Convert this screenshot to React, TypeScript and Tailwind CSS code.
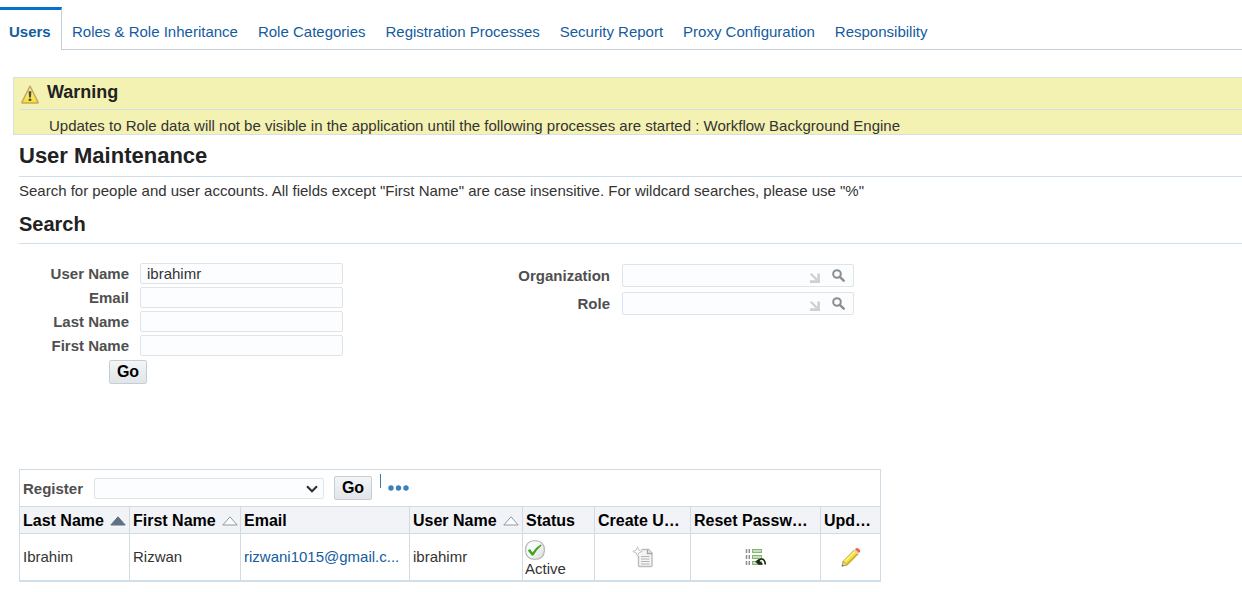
import React from 'react';

const tabs = [
  'Roles & Role Inheritance',
  'Role Categories',
  'Registration Processes',
  'Security Report',
  'Proxy Configuration',
  'Responsibility',
];

function WarningIcon() {
  return (
    <svg className="h-[19px] w-[18px] shrink-0" viewBox="0 0 18 19" aria-hidden="true">
      <defs>
        <linearGradient id="warn" x1="0" y1="0" x2="0" y2="1">
          <stop offset="0" stopColor="#f8f3a8" />
          <stop offset="1" stopColor="#f3e22c" />
        </linearGradient>
      </defs>
      <path d="M9 1.2 17 17.2Q17.3 18 16.4 18H1.6Q.7 18 1 17.2Z" fill="url(#warn)" stroke="#c5a868" strokeWidth="1.5" strokeLinejoin="round" />
      <path d="M7.6 6.2h2.8l-.5 6.3H8.100Z" fill="#4b4a3c" />
      <rect x="7.7" y="13.7" width="2.6" height="2.2" fill="#4b4a3c" />
    </svg>
  );
}

function LovIcons() {
  return (
    <>
      <svg className="mt-1 h-[10px] w-[10px]" viewBox="0 0 10 10" aria-hidden="true">
        <path d="M.8.8 7 7" stroke="#cfcfcf" strokeWidth="2.2" fill="none" />
        <path d="M8.6.5v8.100H0" stroke="#cfcfcf" strokeWidth="2.600" fill="none" />
      </svg>
      <button type="button" aria-label="Search for value" className="flex">
        <svg className="h-[13px] w-[13px]" viewBox="0 0 13 13" aria-hidden="true">
          <circle cx="5" cy="5" r="3.800" fill="none" stroke="#8b8e91" strokeWidth="2" />
          <path d="m7.8 7.8 3.900 3.900" stroke="#8b8e91" strokeWidth="2.400" strokeLinecap="round" />
        </svg>
      </button>
    </>
  );
}

function TextField({ id, label, value = '' }: { id: string; label: string; value?: string }) {
  return (
    <>
      <label htmlFor={id} className="text-right font-bold text-[#4f4f4f]">{label}</label>
      <input id={id} defaultValue={value} className="h-[21px] w-[203px] rounded-xs border border-[#dfe4e7] bg-[#fcfdfe] px-1.5 text-[#333333] outline-none" />
    </>
  );
}

function LovField({ id, label }: { id: string; label: string }) {
  return (
    <>
      <label htmlFor={id} className="text-right font-bold text-[#4f4f4f]">{label}</label>
      <div className="flex h-[23px] w-[232px] items-center gap-3 rounded-xs border border-[#dfe4e7] bg-[#fcfdfe] pr-2">
        <input id={id} className="min-w-0 flex-1 bg-transparent px-1.5 text-[#333333] outline-none" />
        <LovIcons />
      </div>
    </>
  );
}

function GoButton() {
  return (
    <button type="button" className="h-6 w-[38px] rounded-xs border border-[#c4ced7] bg-linear-to-b from-[#f3f5f6] to-[#e1e5e8] text-base leading-5 font-bold text-black">
      Go
    </button>
  );
}

function SortIcon({ active = false }: { active?: boolean }) {
  return (
    <svg className="h-[10px] w-4 shrink-0" viewBox="0 0 16 10" aria-hidden="true">
      <path d="M8 .8 15.2 9H.8Z" fill={active ? '#5f7284' : '#fafbfc'} stroke={active ? '#5f7284' : '#8d9aa5'} />
    </svg>
  );
}

function SortHeader({ children, active }: { children: string; active?: boolean }) {
  return (
    <button type="button" className="flex items-center gap-[6px] pb-px font-bold whitespace-nowrap">
      {children}
      <SortIcon active={active} />
    </button>
  );
}

function CheckIcon() {
  return (
    <svg className="h-5 w-5" viewBox="0 0 20 20" aria-hidden="true">
      <defs>
        <linearGradient id="disc" x1="0" y1="0" x2="1" y2="1">
          <stop offset="0" stopColor="#ffffff" />
          <stop offset=".5" stopColor="#f6f6f6" />
          <stop offset="1" stopColor="#d8d8d8" />
        </linearGradient>
      </defs>
      <rect x=".7" y=".7" width="18.600" height="18.600" rx="8" fill="url(#disc)" stroke="#b0b0b0" strokeWidth="1.100" />
      <path d="m2.800 10.400 2.300-1.500 2.400 3.500Q10.500 7.400 15.700 4.400l1.100.9Q11.700 9.700 8.400 15.400H6.800Z" fill="#3da51d" />
    </svg>
  );
}

function CreateIcon() {
  return (
    <svg className="h-[22px] w-[21px]" viewBox="0 0 21 22" aria-hidden="true">
      <path d="M9.500 3.500h7l3.500 3.500v12.500q0 1-1 1H7.500q-1 0-1-1V10" fill="#f4f4f4" stroke="#bcbcbc" strokeWidth="1.400" />
      <path d="M15.500 3.500v4h4.500" fill="#eeeeee" stroke="#a4a4a4" strokeWidth="1.300" />
      <path d="M9 10.500h8.500M9 13h8.500M9 15.500h8.500M9 18h8.500" stroke="#b3b3b3" strokeWidth="1.200" />
      <path d="m5.500.8 1.300 3.400L10.200 5.500 6.800 6.800 5.500 10.200 4.200 6.800.8 5.500 4.200 4.200Z" fill="#ffffff" stroke="#c2c2c2" strokeWidth="1" />
    </svg>
  );
}

function ResetIcon() {
  return (
    <svg className="h-[18px] w-[22px]" viewBox="0 0 22 18" aria-hidden="true">
      <path d="M1.500 1v4M4.300 1v4M1.500 7v4M4.300 7v4M1.500 13v4M4.300 13v4" stroke="#8f8f8f" strokeWidth="1.500" />
      <g fill="#c5dfbb" stroke="#87b574">
        <rect x="7.500" y="1.500" width="9" height="3" />
        <rect x="7.500" y="7.500" width="9" height="3" />
        <rect x="7.500" y="13.500" width="9" height="3" />
      </g>
      <path d="M13.500 13.500Q14.500 10.800 17 11 20 11.500 20.300 16.500" fill="none" stroke="#1d2a1b" strokeWidth="1.700" />
      <path d="M10.300 13.600 14 10.800 14.500 13.200 17.800 15.400 17.500 16.800H13.500Z" fill="#1d2a1b" />
    </svg>
  );
}

function PencilIcon() {
  return (
    <svg className="h-5 w-5" viewBox="0 0 20 20" aria-hidden="true">
      <path d="M1 19.200 2.200 14.200 13 3.200 17.300 7 6.500 17.900Z" fill="#f0e03c" stroke="#b8982c" strokeWidth=".8" />
      <path d="M4 14.300 14 4.500" stroke="#fbf48a" strokeWidth="1.600" />
      <path d="M6.200 17 16.300 6.900" stroke="#cfae2c" strokeWidth="1.300" />
      <path d="M1 19.200 2.200 14.400 6.200 17.900Z" fill="#e3d3a4" stroke="#a99058" strokeWidth=".6" />
      <path d="M1 19.200 1.500 17.400 2.900 18.600Z" fill="#6b6548" />
      <path d="M12.800 3.400 14 2.200 18 6 16.800 7.300Z" fill="#d9d7c6" />
      <path d="M14 2.200 15 1.300Q16.200.5 17.400 1.400L19 3Q19.700 4.200 18.900 5.100L18 6Z" fill="#f2614a" />
    </svg>
  );
}

const th = 'h-[27px] border border-[#d1dbe3] bg-[#f2f3f7] px-[3px] pt-0.5 pb-0 text-left text-base leading-5 font-bold text-black truncate';
const td = 'h-[47px] border border-[#d1dbe3] px-[3px] py-0 text-[#333333]';

export default function App() {
  return (
    <div className="min-h-screen bg-white pt-[7px] font-['Liberation_Sans',Arial,sans-serif] text-[15px] leading-[18px] text-[#333333]">
      <nav className="flex h-[43px]" aria-label="Sections">
        <a href="#users" className="w-[62px] border-t-[3px] border-r border-t-[#0572ce] border-r-[#c4ced7] pt-[13px] pl-[9px] font-bold text-[#145c9e]">
          Users
        </a>
        <div className="flex flex-1 gap-5 border-b border-[#c4ced7] pt-4 pl-[10px]">
          {tabs.map((t) => (
            <a key={t} href="#section" className="whitespace-nowrap text-[#145c9e]">{t}</a>
          ))}
        </div>
      </nav>

      <section className="mt-[27px] ml-[13px] border border-r-0 border-[#d6dfe6] bg-[#f3f2b3] pl-[5px]">
        <div className="flex h-8 gap-2 border-b border-[#d6dfe6] pl-0.5">
          <div className="pt-[7px]"><WarningIcon /></div>
          <h2 className="pt-1 text-[18px] leading-5 font-bold text-[#222222]">Warning</h2>
        </div>
        <p className="h-6 pt-[7px] pl-[30px] whitespace-nowrap">
          Updates to Role data will not be visible in the application until the following processes are started : Workflow Background Engine
        </p>
      </section>

      <main className="pl-[19px]">
        <h1 className="h-[42px] border-b border-[#d1dfea] pt-2 text-[22px] leading-[26px] font-bold text-[#222222]">User Maintenance</h1>
        <p className="pt-[5px]">
          Search for people and user accounts. All fields except "First Name" are case insensitive. For wildcard searches, please use "%"
        </p>
        <h2 className="mt-3 h-8 border-b border-[#d1dfea] text-[20px] leading-6 font-bold text-[#222222]">Search</h2>

        <form className="flex gap-[174px] pt-[19px]" onSubmit={(e) => e.preventDefault()}>
          <div>
            <div className="grid grid-cols-[110px_203px] items-center gap-x-[11px] gap-y-[3px]">
              <TextField id="user" label="User Name" value="ibrahimr" />
              <TextField id="email" label="Email" />
              <TextField id="last" label="Last Name" />
              <TextField id="first" label="First Name" />
            </div>
            <div className="mt-1 flex pl-[90px]"><GoButton /></div>
          </div>
          <div className="grid grid-cols-[93px_232px] content-start items-center gap-x-3 gap-y-[5px] pt-px">
            <LovField id="org" label="Organization" />
            <LovField id="role" label="Role" />
          </div>
        </form>

        <div className="mt-[85px] w-[862px]">
          <div className="flex h-[37px] items-center border border-b-0 border-[#d1dbe3] pl-[3px]">
            <label htmlFor="register" className="w-[71px] pt-0.5 font-bold text-[#4f4f4f]">Register</label>
            <div className="relative">
              <select id="register" className="block h-[21px] w-[230px] appearance-none rounded-xs border border-[#dfe4e7] bg-[#fcfdfe] px-1" />
              <svg className="pointer-events-none absolute top-[7px] right-[6px] h-2 w-3" viewBox="0 0 12 8" aria-hidden="true">
                <path d="m1 1.300 5 5 5-5" fill="none" stroke="#2b2b2b" strokeWidth="2" />
              </svg>
            </div>
            <div className="flex pl-[10px]"><GoButton /></div>
            <div className="mt-1 ml-2 h-[14px] w-px self-start bg-[#3b7aa8]" />
            <button type="button" aria-label="More actions" className="ml-[7px]">
              <svg className="h-[6px] w-[21px]" viewBox="0 0 21 6" fill="#3a80bd" aria-hidden="true">
                <circle cx="3" cy="3" r="2.700" />
                <circle cx="10.500" cy="3" r="2.700" />
                <circle cx="18" cy="3" r="2.700" />
              </svg>
            </button>
          </div>
          <table className="w-full table-fixed border-collapse border-b-2 border-[#d1dfea]">
            <colgroup>
              <col className="w-[110px]" />
              <col className="w-[111px]" />
              <col className="w-[169px]" />
              <col className="w-[113px]" />
              <col className="w-[72px]" />
              <col className="w-[96px]" />
              <col className="w-[130px]" />
              <col className="w-[60px]" />
            </colgroup>
            <thead>
              <tr>
                <th className={th}><SortHeader active>Last Name</SortHeader></th>
                <th className={th}><SortHeader>First Name</SortHeader></th>
                <th className={th}>Email</th>
                <th className={th}><SortHeader>User Name</SortHeader></th>
                <th className={th}>Status</th>
                <th className={th}>Create User</th>
                <th className={th}>Reset Password</th>
                <th className={th}>Update</th>
              </tr>
            </thead>
            <tbody>
              <tr>
                <td className={td}>Ibrahim</td>
                <td className={td}>Rizwan</td>
                <td className={td}>
                  <a href="mailto:rizwani1015@gmail.com" className="block truncate text-[#145c9e]">rizwani1015@gmail.c...</a>
                </td>
                <td className={td}>ibrahimr</td>
                <td className="border border-[#d1dbe3] py-0 pt-1 pl-0.5 text-[#333333]">
                  <CheckIcon />
                  <div>Active</div>
                </td>
                <td className={td}><button type="button" aria-label="Create user" className="mx-auto flex"><CreateIcon /></button></td>
                <td className={td}><button type="button" aria-label="Reset password" className="mx-auto flex"><ResetIcon /></button></td>
                <td className={td}><button type="button" aria-label="Update" className="mx-auto flex"><PencilIcon /></button></td>
              </tr>
            </tbody>
          </table>
        </div>
      </main>
    </div>
  );
}
